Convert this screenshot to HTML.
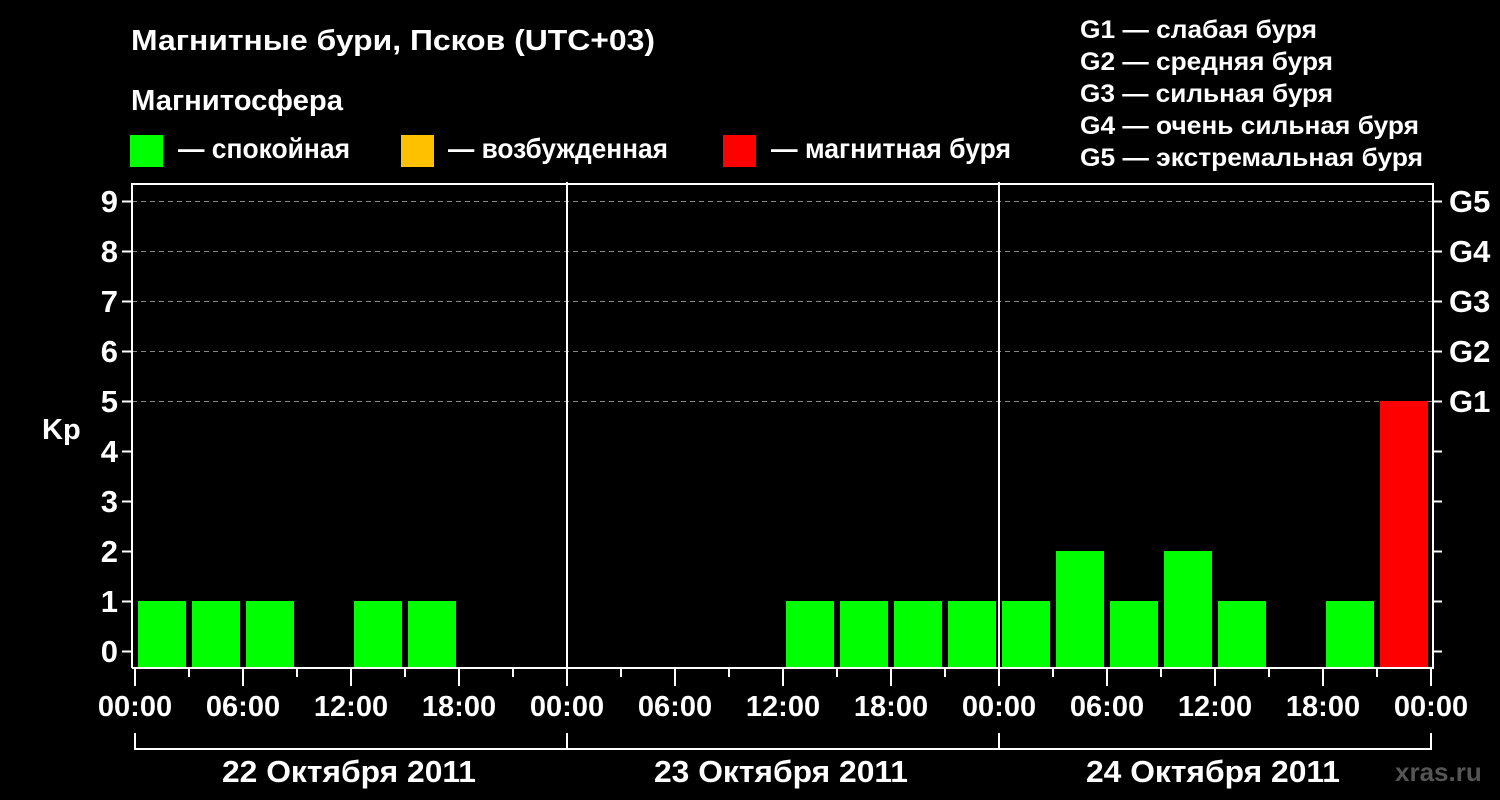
<!DOCTYPE html>
<html><head><meta charset="utf-8"><style>
html,body{margin:0;padding:0;background:#000;width:1500px;height:800px;overflow:hidden}
svg{display:block}
text{font-family:"Liberation Sans",sans-serif;font-weight:bold;fill:#fff}
</style></head><body>
<svg width="1500" height="800" viewBox="0 0 1500 800">
<rect width="1500" height="800" fill="#000"/>
<text x="131" y="50" font-size="29" textLength="524" lengthAdjust="spacingAndGlyphs">Магнитные бури, Псков (UTC+03)</text>
<text x="131" y="110" font-size="29" textLength="212" lengthAdjust="spacingAndGlyphs">Магнитосфера</text>
<rect x="130" y="135" width="33" height="32" fill="#00ff00"/>
<rect x="401" y="135" width="33" height="32" fill="#ffc000"/>
<rect x="723" y="135" width="33" height="32" fill="#ff0000"/>
<text x="178" y="158" font-size="28" textLength="172" lengthAdjust="spacingAndGlyphs">— спокойная</text>
<text x="448" y="158" font-size="28" textLength="220" lengthAdjust="spacingAndGlyphs">— возбужденная</text>
<text x="771" y="158" font-size="28" textLength="240" lengthAdjust="spacingAndGlyphs">— магнитная буря</text>
<g font-size="25">
<text x="1080" y="38" textLength="237" lengthAdjust="spacingAndGlyphs">G1 — слабая буря</text>
<text x="1080" y="70" textLength="253" lengthAdjust="spacingAndGlyphs">G2 — средняя буря</text>
<text x="1080" y="102" textLength="253" lengthAdjust="spacingAndGlyphs">G3 — сильная буря</text>
<text x="1080" y="134" textLength="339" lengthAdjust="spacingAndGlyphs">G4 — очень сильная буря</text>
<text x="1080" y="166" textLength="343" lengthAdjust="spacingAndGlyphs">G5 — экстремальная буря</text>
</g>
<g stroke="#888" stroke-width="1" stroke-dasharray="5,4">
<line x1="132" x2="1432" y1="201.5" y2="201.5"/>
<line x1="132" x2="1432" y1="251.5" y2="251.5"/>
<line x1="132" x2="1432" y1="301.5" y2="301.5"/>
<line x1="132" x2="1432" y1="351.5" y2="351.5"/>
<line x1="132" x2="1432" y1="401.5" y2="401.5"/>
</g>
<g fill="#00ff00">
<rect x="138" y="601" width="48" height="67"/>
<rect x="192" y="601" width="48" height="67"/>
<rect x="246" y="601" width="48" height="67"/>
<rect x="354" y="601" width="48" height="67"/>
<rect x="408" y="601" width="48" height="67"/>
<rect x="786" y="601" width="48" height="67"/>
<rect x="840" y="601" width="48" height="67"/>
<rect x="894" y="601" width="48" height="67"/>
<rect x="948" y="601" width="48" height="67"/>
<rect x="1002" y="601" width="48" height="67"/>
<rect x="1056" y="551" width="48" height="117"/>
<rect x="1110" y="601" width="48" height="67"/>
<rect x="1164" y="551" width="48" height="117"/>
<rect x="1218" y="601" width="48" height="67"/>
<rect x="1326" y="601" width="48" height="67"/>
</g>
<rect x="1380" y="401" width="48" height="267" fill="#ff0000"/>
<g stroke="#fff" stroke-width="2" fill="none">
<path d="M132 668 V184 H1433 V668 H132"/>
<line x1="567" y1="182" x2="567" y2="668"/>
<line x1="999" y1="182" x2="999" y2="668"/>
<path d="M122 201.5h9M122 251.5h9M122 301.5h9M122 351.5h9M122 401.5h9M122 451.5h9M122 501.5h9M122 551.5h9M122 601.5h9M122 651.5h9"/>
<path d="M1433 201.5h9M1433 251.5h9M1433 301.5h9M1433 351.5h9M1433 401.5h9M1433 451.5h9M1433 501.5h9M1433 551.5h9M1433 601.5h9M1433 651.5h9"/>
<path d="M135 668v18M189 668v9M243 668v18M297 668v9M351 668v18M405 668v9M459 668v18M513 668v9M567 668v18M621 668v9M675 668v18M729 668v9M783 668v18M837 668v9M891 668v18M945 668v9M999 668v18M1053 668v9M1107 668v18M1161 668v9M1215 668v18M1269 668v9M1323 668v18M1377 668v9M1431 668v18"/>
<path d="M135 733V749H1431V733M567 733V749M999 733V749"/>
</g>
<g font-size="31" text-anchor="end">
<text x="118" y="212">9</text><text x="118" y="262">8</text><text x="118" y="312">7</text><text x="118" y="362">6</text><text x="118" y="412">5</text><text x="118" y="462">4</text><text x="118" y="512">3</text><text x="118" y="562">2</text><text x="118" y="612">1</text><text x="118" y="662">0</text>
</g>
<text x="42" y="439" font-size="29">Kp</text>
<g font-size="31">
<text x="1449" y="212">G5</text><text x="1449" y="262">G4</text><text x="1449" y="312">G3</text><text x="1449" y="362">G2</text><text x="1449" y="412">G1</text>
</g>
<g font-size="29" text-anchor="middle">
<text x="135" y="716">00:00</text><text x="243" y="716">06:00</text><text x="351" y="716">12:00</text><text x="459" y="716">18:00</text>
<text x="567" y="716">00:00</text><text x="675" y="716">06:00</text><text x="783" y="716">12:00</text><text x="891" y="716">18:00</text>
<text x="999" y="716">00:00</text><text x="1107" y="716">06:00</text><text x="1215" y="716">12:00</text><text x="1323" y="716">18:00</text>
<text x="1431" y="716">00:00</text>
</g>
<g font-size="31" text-anchor="middle">
<text x="349" y="782" textLength="254" lengthAdjust="spacingAndGlyphs">22 Октября 2011</text>
<text x="781" y="782" textLength="254" lengthAdjust="spacingAndGlyphs">23 Октября 2011</text>
<text x="1213" y="782" textLength="254" lengthAdjust="spacingAndGlyphs">24 Октября 2011</text>
</g>
<text x="1395" y="781" font-size="26" style="fill:#555">xras.ru</text>
</svg>
</body></html>
